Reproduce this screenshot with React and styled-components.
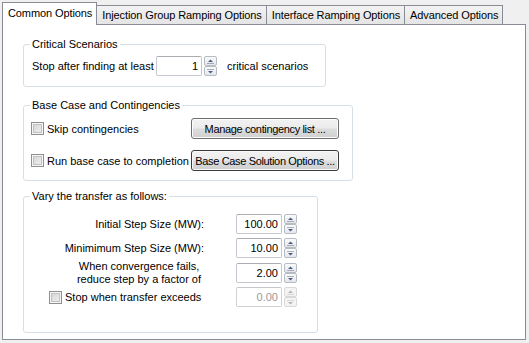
import React from 'react'
import styled, { createGlobalStyle } from 'styled-components'

const GlobalStyle = createGlobalStyle`
  html, body {
    margin: 0;
    padding: 0;
    background: #f0f0f0;
  }
  body {
    font-family: "Liberation Sans", Arial, sans-serif;
    font-size: 11px;
    color: #000;
  }
`

const Page = styled.div`
  width: 529px;
  height: 343px;
  box-sizing: border-box;
  padding: 2px 0 0 2px;
  overflow: hidden;
`

const TabStrip = styled.div`
  display: flex;
  align-items: flex-end;
  height: 22px;
`

const Tab = styled.div`
  display: flex;
  align-items: center;
  box-sizing: border-box;
  white-space: nowrap;
  border: 1px solid #898c95;
  border-bottom: none;
  letter-spacing: -0.1px;
  ${({ $active }) =>
    $active
      ? `
    height: 23px;
    margin-bottom: -1px;
    padding: 0 4px 2px 5px;
    background: #fff;
    position: relative;
    z-index: 1;
  `
      : `
    height: 19px;
    margin-left: -1px;
    padding: 0 4px 0 5px;
    background: linear-gradient(#f3f3f3, #e4e4e4);
  `}
`

const Panel = styled.div`
  width: 524px;
  height: 316px;
  box-sizing: border-box;
  background: #fff;
  border: 1px solid #898c95;
  padding-left: 20px;
`

const Group = styled.fieldset`
  margin: ${({ $mt }) => $mt}px 0 0 0;
  padding: 0;
  width: ${({ $w }) => $w}px;
  box-sizing: border-box;
  min-width: 0;
  border: 1px solid #d5dfe5;
  border-radius: 3px;
`

const Legend = styled.legend`
  font-size: 11px;
  line-height: 13px;
  padding: 0 2px;
  margin-left: 6px;
`

const ScenarioBody = styled.div`
  display: flex;
  align-items: center;
  height: 20px;
  padding: 5px 0 10px 8px;
`

const FixedLabel = styled.span`
  width: ${({ $w }) => $w}px;
  white-space: nowrap;
`

const TrailLabel = styled.span`
  margin-left: 10px;
  white-space: nowrap;
`

const CaseBody = styled.div`
  display: grid;
  grid-template-columns: 160px 148px;
  grid-auto-rows: 21px;
  row-gap: 11px;
  align-items: center;
  padding: 6px 0 9px 7px;
`

const CheckLabel = styled.label`
  display: flex;
  align-items: center;
  gap: 3px;
  white-space: nowrap;
  padding-left: ${({ $indent }) => $indent || 0}px;
`

const Box = styled.span`
  width: 13px;
  height: 13px;
  box-sizing: border-box;
  border: 1px solid #8e8f8f;
  background: linear-gradient(135deg, #d0d0d0, #f4f4f4);
  box-shadow: inset 0 0 0 1px #f6f6f6, inset 0 0 0 2px #c2c2c2;
  flex: none;
`

const Button = styled.button`
  width: 148px;
  height: 21px;
  padding: 0;
  box-sizing: border-box;
  font: inherit;
  letter-spacing: -0.35px;
  color: #000;
  white-space: nowrap;
  overflow: hidden;
  border: 1px solid ${({ $focus }) => ($focus ? '#3c3c3c' : '#707070')};
  border-radius: 3px;
  background: linear-gradient(#f2f2f2 0%, #ebebeb 48%, #dddddd 52%, #cfcfcf 100%);
  box-shadow: inset 0 0 0 1px ${({ $focus }) => ($focus ? '#f8f8f8' : '#fcfcfc')};
`

const TransferBody = styled.div`
  display: flex;
  flex-direction: column;
  padding: 11px 0 25px 0;
`

const Row = styled.div`
  display: flex;
  align-items: center;
  height: ${({ $h }) => $h || 20}px;
  margin-top: ${({ $mt }) => $mt || 0}px;
`

const RowLabel = styled.div`
  width: 180px;
  margin-right: 32px;
  display: flex;
  justify-content: ${({ $left }) => ($left ? 'flex-start' : 'flex-end')};
  text-align: right;
  white-space: nowrap;
`

const TwoLine = styled.span`
  display: block;
  width: 130px;
  text-align: center;
  line-height: 13px;
`

const Field = styled.input`
  width: ${({ $w }) => $w || 46}px;
  height: 20px;
  box-sizing: border-box;
  margin: 0;
  padding: 0 3px 0 0;
  font: inherit;
  text-align: right;
  color: ${({ disabled }) => (disabled ? '#9a9a9a' : '#000')};
  background: #fff;
  border: 1px solid ${({ disabled }) => (disabled ? '#cfd1d4' : '#c5c9cf')};
  border-top-color: ${({ disabled }) => (disabled ? '#c6c8cb' : '#abadb3')};
  border-radius: 2px;
  outline: none;
`

const Spin = styled.div`
  display: flex;
  flex-direction: column;
  margin-left: 2px;
  width: 13px;
  height: 20px;
`

const SpinButton = styled.div`
  height: 10px;
  box-sizing: border-box;
  display: flex;
  align-items: center;
  justify-content: center;
  border: 1px solid ${({ $off }) => ($off ? '#d9d9d9' : '#b6bcc6')};
  border-radius: 2px;
  background: ${({ $off }) =>
    $off ? '#f4f4f4' : 'linear-gradient(#fbfbfb, #e4e6e9)'};
  & svg {
    display: block;
    fill: ${({ $off }) => ($off ? '#b4b4b4' : '#4a5e80')};
  }
`

const Arrow = ({ down }) => (
  <svg width="7" height="5" viewBox="0 0 7 5">
    {down ? (
      <>
        <rect x="0" y="0" width="7" height="1" opacity="0.45" />
        <polygon points="1,2 6,2 3.5,4.5" />
      </>
    ) : (
      <>
        <polygon points="1,3 6,3 3.5,0.5" />
        <rect x="0" y="4" width="7" height="1" opacity="0.45" />
      </>
    )}
  </svg>
)

const Spinner = ({ value, off, width }) => (
  <>
    <Field readOnly disabled={off} defaultValue={value} $w={width} />
    <Spin>
      <SpinButton $off={off}>
        <Arrow />
      </SpinButton>
      <SpinButton $off={off}>
        <Arrow down />
      </SpinButton>
    </Spin>
  </>
)

const tabs = [
  'Common Options',
  'Injection Group Ramping Options',
  'Interface Ramping Options',
  'Advanced Options',
]

export default function App() {
  return (
    <Page>
      <GlobalStyle />
      <TabStrip>
        {tabs.map((t, i) => (
          <Tab key={t} $active={i === 0}>
            {t}
          </Tab>
        ))}
      </TabStrip>
      <Panel>
        <Group $mt={13} $w={303}>
          <Legend>Critical Scenarios</Legend>
          <ScenarioBody>
            <FixedLabel $w={124}>Stop after finding at least</FixedLabel>
            <Spinner value="1" width={46} />
            <TrailLabel>critical scenarios</TrailLabel>
          </ScenarioBody>
        </Group>

        <Group $mt={12} $w={330}>
          <Legend>Base Case and Contingencies</Legend>
          <CaseBody>
            <CheckLabel>
              <Box />
              Skip contingencies
            </CheckLabel>
            <Button>Manage contingency list ...</Button>
            <CheckLabel>
              <Box />
              Run base case to completion
            </CheckLabel>
            <Button $focus>Base Case Solution Options ...</Button>
          </CaseBody>
        </Group>

        <Group $mt={9} $w={295}>
          <Legend>Vary the transfer as follows:</Legend>
          <TransferBody>
            <Row>
              <RowLabel>Initial Step Size (MW):</RowLabel>
              <Spinner value="100.00" />
            </Row>
            <Row $mt={4}>
              <RowLabel>Minimimum Step Size (MW):</RowLabel>
              <Spinner value="10.00" />
            </Row>
            <Row $mt={2} $h={26}>
              <RowLabel>
                <TwoLine>
                  When convergence fails,
                  <br />
                  reduce step by a factor of
                </TwoLine>
              </RowLabel>
              <Spinner value="2.00" />
            </Row>
            <Row $mt={1}>
              <RowLabel $left>
                <CheckLabel $indent={25}>
                  <Box />
                  Stop when transfer exceeds
                </CheckLabel>
              </RowLabel>
              <Spinner value="0.00" off />
            </Row>
          </TransferBody>
        </Group>
      </Panel>
    </Page>
  )
}
